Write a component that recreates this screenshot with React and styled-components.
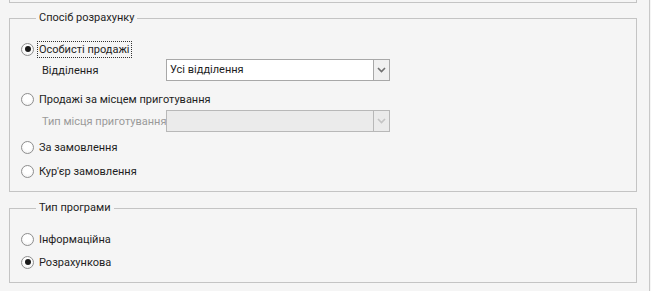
import React from "react";
import styled, { createGlobalStyle } from "styled-components";

const Global = createGlobalStyle`
  html, body { margin: 0; padding: 0; background: #f5f5f5; }
  body { font-family: Roboto, "Liberation Sans", sans-serif; font-size: 11px; color: #1e1e1e; }
`;

const Page = styled.div`
  width: 650px;
  height: 291px;
  border-right: 1px solid #c8c8c8;
  padding: 0 12px 0 9px;
  box-sizing: border-box;
  background: #f5f5f5;
`;

const TopStub = styled.div`
  height: 2px;
  border: 1px solid #c4c4c4;
  border-top: none;
`;

const Group = styled.fieldset`
  margin: ${p => p.$mt}px 0 0 0;
  padding: 13px 0 10px 11px;
  border: 1px solid #c4c4c4;
  display: flex;
  flex-direction: column;
`;

const Legend = styled.legend`
  margin-left: 15px;
  padding: 0 3px;
  line-height: 16px;
  color: #1e1e1e;
`;

const RadioRow = styled.label`
  display: flex;
  align-items: center;
  height: 20px;
  margin-top: ${p => p.$mt || 0}px;
  white-space: nowrap;
  cursor: default;
`;

const Circle = styled.span`
  width: 13px;
  height: 13px;
  box-sizing: border-box;
  border-radius: 50%;
  border: 1px solid #8e8e8e;
  background: radial-gradient(circle at 50% 40%, #ffffff 40%, #eaeaea 100%);
  display: flex;
  align-items: center;
  justify-content: center;
  &::after {
    content: "";
    width: 6px;
    height: 6px;
    border-radius: 50%;
    background: ${p => (p.$on ? "#1a1a1a" : "transparent")};
  }
`;

const Caption = styled.span`
  margin-left: 4px;
  padding: 0 1px;
  line-height: 15px;
  outline: ${p => (p.$focus ? "1px dotted #333" : "none")};
`;

const FieldRow = styled.div`
  display: flex;
  align-items: center;
  height: 22px;
  margin-top: ${p => p.$mt || 0}px;
  padding-left: 21px;
  white-space: nowrap;
  color: ${p => (p.$disabled ? "#9a9a9a" : "#1e1e1e")};
`;

const FieldLabel = styled.span`
  width: 124px;
  flex-shrink: 0;
`;

const Select = styled.div`
  width: 224px;
  height: 22px;
  box-sizing: border-box;
  border: 1px solid ${p => (p.$disabled ? "#b8b8b8" : "#a8a8a8")};
  background: ${p => (p.$disabled ? "#ebebeb" : "#ffffff")};
  display: flex;
`;

const Value = styled.span`
  flex: 1;
  padding-left: 3px;
  line-height: 20px;
  color: #1e1e1e;
`;

const Arrow = styled.span`
  width: 15px;
  border-left: 1px solid ${p => (p.$disabled ? "#b8b8b8" : "#a8a8a8")};
  background: ${p => (p.$disabled ? "#ebebeb" : "#f0f0f0")};
  display: flex;
  align-items: center;
  justify-content: center;
`;

function Chevron({ disabled }) {
  return (
    <svg width="9" height="6" viewBox="0 0 9 6">
      <path d="M1 1 L4.5 4.5 L8 1" fill="none" stroke={disabled ? "#c4c4c4" : "#707070"} strokeWidth="1.6" />
    </svg>
  );
}

function Radio({ on, focus, mt, children }) {
  return (
    <RadioRow $mt={mt}>
      <Circle $on={on} />
      <Caption $focus={focus}>{children}</Caption>
    </RadioRow>
  );
}

export default function App() {
  return (
    <>
      <Global />
      <Page>
        <TopStub />
        <Group $mt={7}>
          <Legend>Спосіб розрахунку</Legend>
          <Radio on focus>Особисті продажі</Radio>
          <FieldRow>
            <FieldLabel>Відділення</FieldLabel>
            <Select>
              <Value>Усі відділення</Value>
              <Arrow><Chevron /></Arrow>
            </Select>
          </FieldRow>
          <Radio mt={8}>Продажі за місцем приготування</Radio>
          <FieldRow $disabled $mt={1}>
            <FieldLabel>Тип місця приготування</FieldLabel>
            <Select $disabled>
              <Value />
              <Arrow $disabled><Chevron disabled /></Arrow>
            </Select>
          </FieldRow>
          <Radio mt={5}>За замовлення</Radio>
          <Radio mt={4}>Кур'єр замовлення</Radio>
        </Group>
        <Group $mt={8}>
          <Legend>Тип програми</Legend>
          <Radio>Інформаційна</Radio>
          <Radio on mt={3}>Розрахункова</Radio>
        </Group>
      </Page>
    </>
  );
}
